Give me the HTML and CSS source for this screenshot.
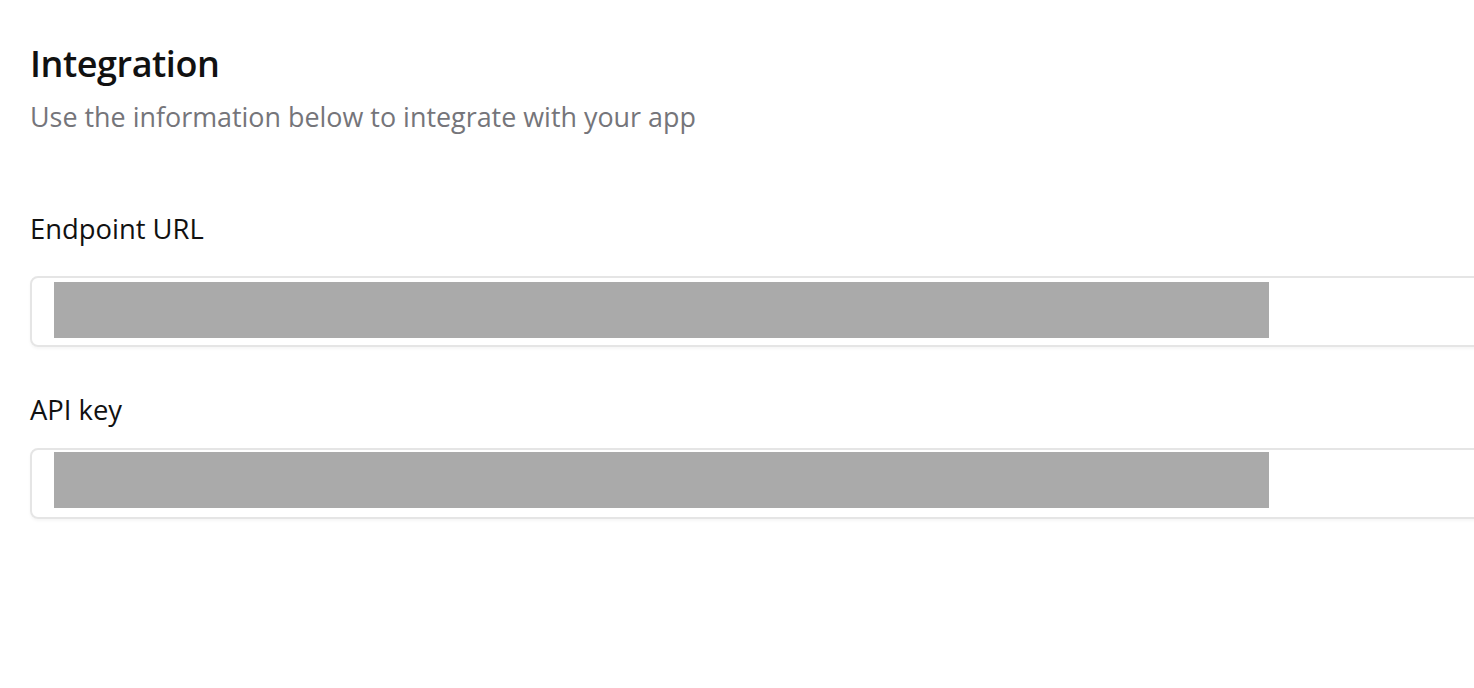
FILE: index.html
```html
<!DOCTYPE html>
<html>
<head>
<meta charset="utf-8">
<link rel="stylesheet" href="styles.css">
</head>
<body>
<main class="page">
  <h1 class="title">Integration</h1>
  <p class="subtitle">Use the information below to integrate with your app</p>
  <section class="field field-first">
    <label class="label">Endpoint URL</label>
    <div class="box box-a"><div class="redact"></div></div>
  </section>
  <section class="field field-second">
    <label class="label">API key</label>
    <div class="box box-b"><div class="redact"></div></div>
  </section>
</main>
</body>
</html>
```
FILE: styles.css
```css
html, body {
  margin: 0;
  padding: 0;
  background: #ffffff;
  overflow: hidden;
}
body {
  font-family: "Open Sans", "Noto Sans", sans-serif;
  width: 1474px;
  height: 688px;
}
.page {
  padding: 40px 0 0 30px;
  width: 1480px;
}
.title {
  margin: 0;
  font-size: 36px;
  line-height: 48px;
  font-weight: 600;
  color: #111111;
  letter-spacing: -0.45px;
}
.subtitle {
  margin: 13px 0 0 0;
  font-size: 26.9px;
  line-height: 32px;
  color: #75757a;
}
.field {
  display: flex;
  flex-direction: column;
}
.field-first {
  margin-top: 80px;
}
.field-second {
  margin-top: 47px;
}
.label {
  font-size: 27.4px;
  line-height: 32px;
  color: #111111;
}
.box {
  width: 1480px;
  height: 71px;
  border: 2px solid #e5e5e5;
  border-radius: 8px;
  box-shadow: 0 2px 3px rgba(0,0,0,0.04);
  padding: 0 0 0 22px;
  box-sizing: border-box;
}
.box-a { margin-top: 31px; padding-top: 4px; }
.box-b { margin-top: 22px; padding-top: 2px; }
.redact {
  width: 1215px;
  height: 56px;
  background: #aaaaaa;
}
```
